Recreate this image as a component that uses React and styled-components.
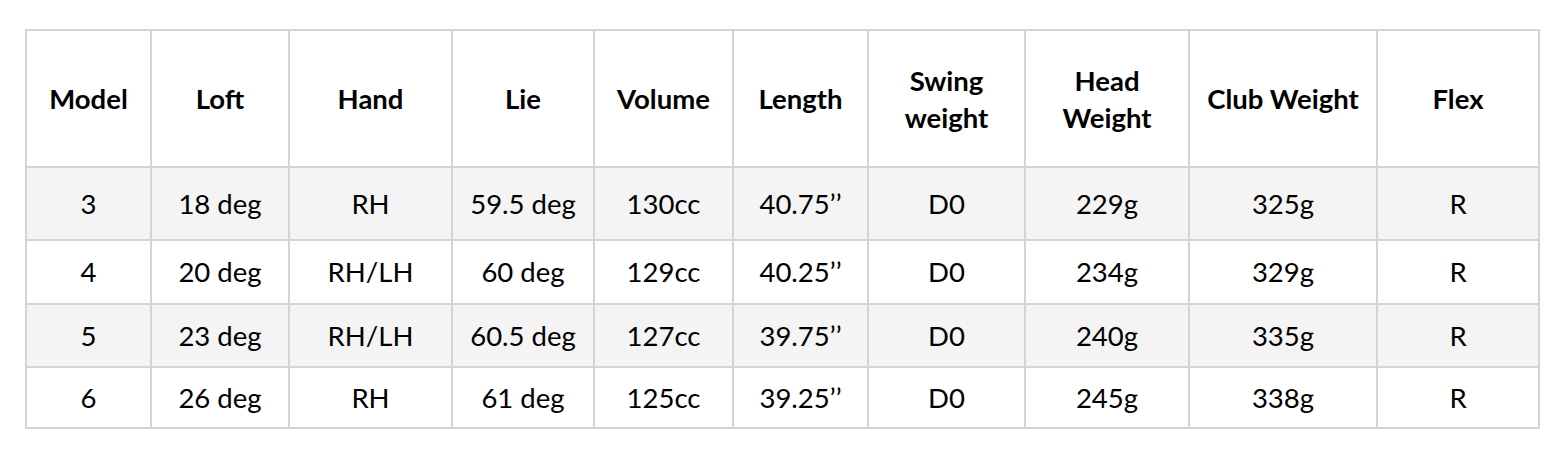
import styled, { createGlobalStyle } from "styled-components";

const GlobalStyle = createGlobalStyle`
  html, body {
    margin: 0;
    padding: 0;
    background: #fff;
  }
  body {
    font-family: Lato, "Open Sans", "Liberation Sans", sans-serif;
    color: #000;
  }
`;

const Page = styled.div`
  padding: 29px 0 0 25px;
`;

const Table = styled.table`
  border-collapse: collapse;
  table-layout: fixed;
  width: 1515px;
  font-size: 27.5px;
`;

const HeadCell = styled.th`
  height: 135px;
  border: 2px solid #d4d4d4;
  font-weight: 700;
  line-height: 37px;
  text-align: center;
  vertical-align: middle;
  padding: 0 4px;
  background: #fff;
`;

const Row = styled.tr`
  background: ${(p) => (p.$shade ? "#f4f4f4" : "#fff")};
  height: ${(p) => p.$h}px;
`;

const Cell = styled.td`
  border: 2px solid #d4d4d4;
  text-align: center;
  vertical-align: middle;
  padding: 0;
  line-height: 1;
`;

const widths = [125, 138, 163, 142, 139, 135, 157, 164, 188, 162];

const headers = [
  "Model",
  "Loft",
  "Hand",
  "Lie",
  "Volume",
  "Length",
  ["Swing", "weight"],
  ["Head", "Weight"],
  "Club Weight",
  "Flex",
];

const rows = [
  { h: 73, cells: ["3", "18 deg", "RH", "59.5 deg", "130cc", "40.75\u2019\u2019", "D0", "229g", "325g", "R"] },
  { h: 64, cells: ["4", "20 deg", "RH/LH", "60 deg", "129cc", "40.25\u2019\u2019", "D0", "234g", "329g", "R"] },
  { h: 63, cells: ["5", "23 deg", "RH/LH", "60.5 deg", "127cc", "39.75\u2019\u2019", "D0", "240g", "335g", "R"] },
  { h: 61, cells: ["6", "26 deg", "RH", "61 deg", "125cc", "39.25\u2019\u2019", "D0", "245g", "338g", "R"] },
];

export default function App() {
  return (
    <Page>
      <GlobalStyle />
      <Table>
        <colgroup>
          {widths.map((w, i) => (
            <col key={i} style={{ width: w }} />
          ))}
        </colgroup>
        <thead>
          <tr>
            {headers.map((h, i) => (
              <HeadCell key={i}>
                {Array.isArray(h) ? (
                  <>
                    {h[0]}
                    <br />
                    {h[1]}
                  </>
                ) : (
                  h
                )}
              </HeadCell>
            ))}
          </tr>
        </thead>
        <tbody>
          {rows.map((r, i) => (
            <Row key={i} $h={r.h} $shade={i % 2 === 0}>
              {r.cells.map((c, j) => (
                <Cell key={j}>{c}</Cell>
              ))}
            </Row>
          ))}
        </tbody>
      </Table>
    </Page>
  );
}
